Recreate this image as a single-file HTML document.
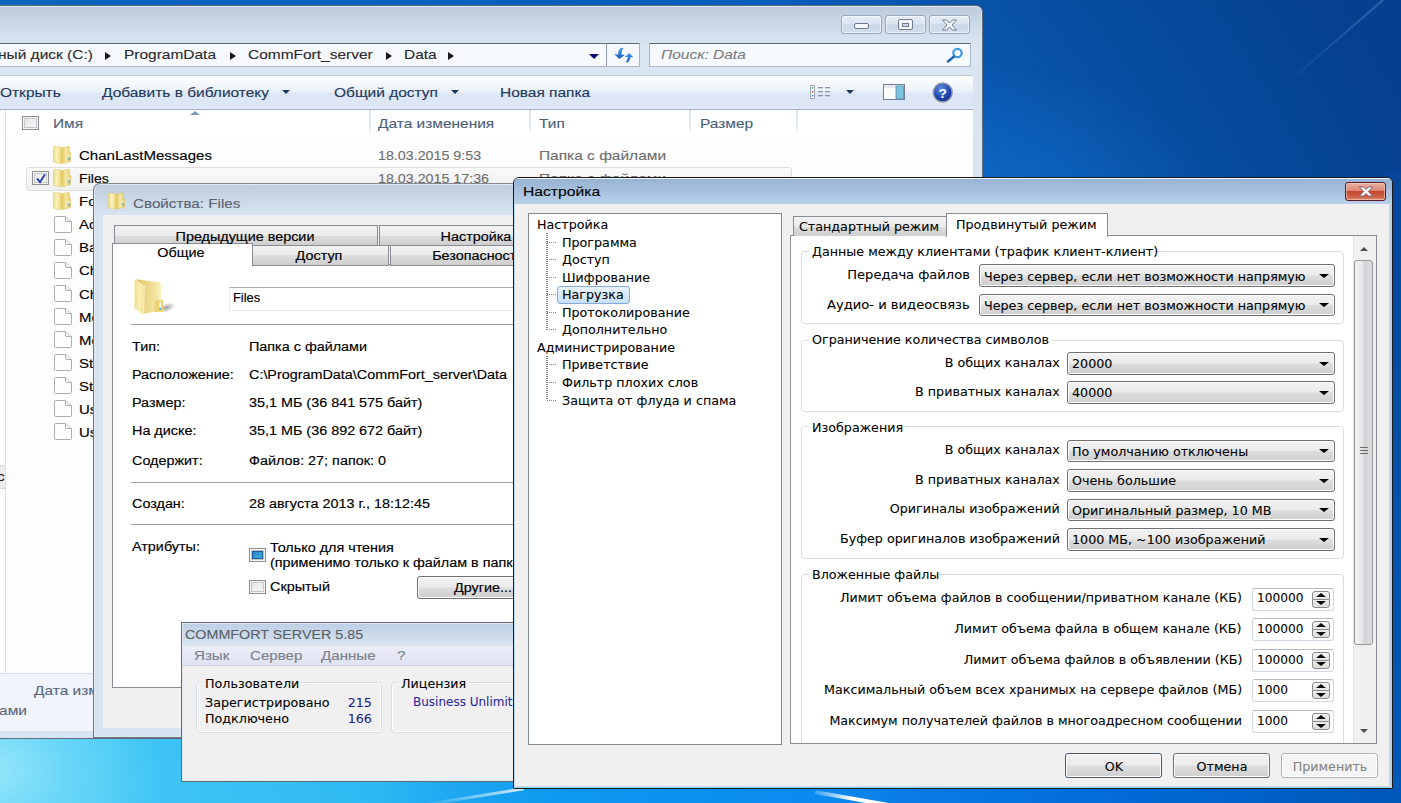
<!DOCTYPE html>
<html lang="ru">
<head>
<meta charset="utf-8">
<title>Настройка</title>
<style>
*{box-sizing:border-box;margin:0;padding:0}
html,body{width:1401px;height:803px;overflow:hidden}
body{position:relative;font-family:"Liberation Sans",sans-serif;font-size:13px;color:#000;
 background:#0a4fa6}
.abs{position:absolute}
.nw{white-space:nowrap}
/* horizontally stretched text helpers */
.sx{display:inline-block;white-space:nowrap;transform-origin:0 50%}
.sxr{display:inline-block;white-space:nowrap;transform-origin:100% 50%}
/* ---------- desktop ---------- */
#desk{position:absolute;left:0;top:0;width:1401px;height:803px;overflow:hidden;
 background:radial-gradient(ellipse 170px 120px at -10px 770px,rgba(155,232,250,.95),rgba(125,224,249,.6) 45%,rgba(100,215,248,0) 100%),radial-gradient(circle at -100px 900px,#62d0f7 0,#52caf6 177px,#3fc5f5 277px,#2bb7f2 511px,#22a2f0 708px,#1e94e8 810px,#0f64be 905px,#0d60be 1000px,#0a5cbc 1250px,#0853a8 1400px,#054a9c 1531px,#063f8e 1700px)}
#desk .glow{position:absolute;left:960px;top:60px;width:260px;height:200px;background:radial-gradient(ellipse at 10% 80%,rgba(20,120,215,.55),rgba(20,120,215,0) 70%)}
#desk .bs{position:absolute;left:380px;top:776px;width:1021px;height:27px;background:linear-gradient(90deg,rgba(32,170,240,0) 0,#1fa8f0 70px,#0d9af0 170px,#0a90f0 320px,#0b8af0 450px,#0a7ce6 520px,#0068d4 770px,#0058b8 1021px)}
#desk .rs{position:absolute;left:1384px;top:170px;width:17px;height:633px;background:linear-gradient(180deg,#05469a,#034ea6 35%,#0254b0 68%,#0058b8 97%)}
#desk .fs{position:absolute;left:1285px;top:84px;width:130px;height:1.5px;background:linear-gradient(90deg,rgba(120,170,230,0),rgba(120,170,230,.35));transform:rotate(-41deg);transform-origin:0 50%}
#desk .streak1{position:absolute;left:815px;top:790px;width:95px;height:4px;background:linear-gradient(90deg,rgba(255,255,255,.2),#fff 40%,#fff);transform:rotate(10deg);transform-origin:0 50%;border-radius:2px}
#desk .streak2{position:absolute;left:425px;top:803px;width:100px;height:3px;background:linear-gradient(90deg,rgba(255,255,255,0),rgba(255,255,255,.8));transform:rotate(-9deg);transform-origin:0 50%;border-radius:2px}
/* ---------- text groups ---------- */
.seg{-webkit-text-stroke:.12px currentColor;position:absolute;white-space:nowrap;font-family:"Liberation Sans",sans-serif;font-size:13px;line-height:16px;transform:scaleX(1.19);transform-origin:0 50%;color:#000}
.ms{-webkit-text-stroke:.15px currentColor;position:absolute;margin-top:.5px;white-space:nowrap;font-family:"Liberation Sans",sans-serif;font-size:12.5px;line-height:16px;transform:scaleX(1.15);transform-origin:0 50%;color:#000}
.tah{-webkit-text-stroke:.08px currentColor;position:absolute;margin-top:.8px;white-space:nowrap;font-family:"DejaVu Sans","Liberation Sans",sans-serif;font-size:12px;line-height:16px;transform:scaleX(1.058);transform-origin:0 50%;color:#000}
.r{transform-origin:100% 50%}
.c{transform-origin:50% 50%;text-align:center}
/* ---------- explorer ---------- */
#exp{position:absolute;left:-30px;top:5px;width:1013px;height:734px;border:1px solid #5f6b7a;border-radius:7px;
 background:linear-gradient(180deg,#bccbdc 0px,#c6d4e3 12px,#d4dfed 28px,#dae5f2 40px,#d9e4f1 100%);
 box-shadow:inset 0 0 0 1px #dbe5f0}
.addr{position:absolute;top:43px;height:24px;background:#f6f9fd;border:1px solid #a9b6c7;border-top-color:#5f6a78;border-radius:1px}
.tb{position:absolute;left:0;top:75px;width:973px;height:35px;background:linear-gradient(180deg,#ffffff 0%,#f4f8fd 25%,#e9f0fa 49%,#dce6f4 52%,#dce6f4 92%,#e4ecf7 100%);border-top:1px solid #c3cad4;border-bottom:1px solid #a3b2c6}
.ct{position:absolute;left:0;top:110px;width:973px;height:563px;background:#fdfdfd}
.dp{position:absolute;left:0;top:673px;width:973px;height:58px;background:#f1f5fb;border-top:1px solid #d4dfed}
.tbt{color:#1e395b}
.hdr{color:#4c607a}
.gray{color:#6d6d6d}
.arr{position:absolute;width:0;height:0;border-style:solid}
.colsep{position:absolute;top:110px;width:1.5px;height:25px;background:linear-gradient(180deg,#dde6f5,#e4ebf6 70%,#fff)}
.fold{position:absolute;width:18px;height:18px}
.fico{position:absolute;width:14px;height:17px}
.chk{position:absolute;width:15px;height:15px;border:1px solid #8e8f8f;background:linear-gradient(135deg,#e2e2e2,#fbfbfb);box-shadow:inset 0 0 0 1px #f4f4f4,inset 0 0 0 2px #c4c7cc}


/* ---------- settings ---------- */
.combo{position:absolute;height:22.5px;border:1px solid #707070;border-radius:3px;background:linear-gradient(180deg,#f2f2f2 0%,#ebebeb 48%,#dddddd 52%,#cfcfcf 100%);box-shadow:inset 0 0 0 1px #fcfcfc}
.combo:after{content:"";position:absolute;right:5px;top:8.5px;border-style:solid;border-width:4.6px 5px 0 5px;border-color:#000 transparent transparent transparent}
.gbx{position:absolute;border:1px solid #d5dfe5;border-radius:4px}
.gl{position:absolute;background:#fff;height:14px}
.spin{position:absolute;width:82px;height:23px;background:#fff;border:1px solid #cfd7e2;border-top-color:#b4bac4;border-radius:3px}
.btn{position:absolute;height:25px;border:1px solid #707070;border-radius:3px;background:linear-gradient(180deg,#f2f2f2 0%,#ebebeb 48%,#dddddd 52%,#cfcfcf 100%);box-shadow:inset 0 0 0 1px #fcfcfc}
.dotv{position:absolute;width:1.4px;margin-left:-.6px;background:repeating-linear-gradient(180deg,#868686 0,#868686 1px,transparent 1px,transparent 2px)}
.doth{position:absolute;height:1.3px;margin-left:-1px;padding-right:2px;background:repeating-linear-gradient(90deg,#868686 0,#868686 1px,transparent 1px,transparent 2px)}

/* ---------- generic window bits ---------- */
.layer{position:absolute;left:0;top:0;width:1401px;height:803px;overflow:hidden;pointer-events:none}
</style>
</head>
<body>
<div id="desk"><div class="glow"></div><div class="rs"></div><div class="bs"></div><div class="fs"></div><div class="streak1"></div><div class="streak2"></div></div>

<!-- EXPLORER -->
<svg width="0" height="0" style="position:absolute"><defs>
<linearGradient id="fdl" x1="0" y1="0" x2="1" y2="0"><stop offset="0" stop-color="#efdc86"/><stop offset=".45" stop-color="#fbf3bf"/><stop offset="1" stop-color="#e9d06c"/></linearGradient>
<linearGradient id="fdr" x1="0" y1="0" x2="1" y2="0"><stop offset="0" stop-color="#e2c558"/><stop offset=".5" stop-color="#f5e9a6"/><stop offset="1" stop-color="#e6cb64"/></linearGradient>
</defs></svg>
<div class="layer" id="L1">
<div id="exp"></div>
<div class="addr" style="left:-12px;width:619px"></div>
<div class="addr" style="left:606px;width:34px;border-left-color:#8f9caf"></div>
<div class="addr" style="left:649px;width:322px"></div>
<div class="tb"></div><div class="ct"></div><div class="dp"></div>
<div class="abs" style="left:841px;top:15px;width:41px;height:19px;border:1px solid #97a6ba;border-radius:3px;background:linear-gradient(180deg,#e6edf6 0%,#dae4f0 48%,#cbd7e8 52%,#d3deec 100%);box-shadow:inset 0 0 0 1px rgba(255,255,255,.55)"></div>
<div class="abs" style="left:885px;top:15px;width:41px;height:19px;border:1px solid #97a6ba;border-radius:3px;background:linear-gradient(180deg,#e6edf6 0%,#dae4f0 48%,#cbd7e8 52%,#d3deec 100%);box-shadow:inset 0 0 0 1px rgba(255,255,255,.55)"></div>
<div class="abs" style="left:929px;top:15px;width:41px;height:19px;border:1px solid #97a6ba;border-radius:3px;background:linear-gradient(180deg,#e6edf6 0%,#dae4f0 48%,#cbd7e8 52%,#d3deec 100%);box-shadow:inset 0 0 0 1px rgba(255,255,255,.55)"></div>
<div class="abs" style="left:854px;top:23px;width:15px;height:6px;border:1px solid #6f7c8e;border-radius:2px;background:#f4f6f9"></div>
<div class="abs" style="left:898px;top:19px;width:15px;height:11px;border:1px solid #6f7c8e;border-radius:2px;background:#f4f6f9"></div><div class="abs" style="left:902px;top:23px;width:7px;height:4px;border:1px solid #6f7c8e;background:#cfd9e6"></div>
<svg class="abs" style="left:941px;top:19px;width:17px;height:12px" viewBox="0 0 17 12"><path d="M1.5 1 H5.5 L8.5 4 L11.5 1 H15.5 L11 6 L15.5 11 H11.5 L8.5 8 L5.5 11 H1.5 L6 6 Z" fill="#f6f8fb" stroke="#6f7c8e" stroke-width="1"/></svg>
<span class="seg " style="left:-2px;top:47.0px;color:#2b2b2b;transform:scaleX(1.19)">ный диск (C:)</span>
<span class="seg " style="left:124px;top:47.0px;color:#2b2b2b">ProgramData</span>
<span class="seg " style="left:248px;top:47.0px;color:#2b2b2b">CommFort_server</span>
<span class="seg " style="left:404px;top:47.0px;color:#2b2b2b">Data</span>
<div class="arr" style="left:105px;top:52px;border-width:4px 0 4px 6px;border-color:transparent transparent transparent #1a1a1a"></div>
<div class="arr" style="left:230px;top:52px;border-width:4px 0 4px 6px;border-color:transparent transparent transparent #1a1a1a"></div>
<div class="arr" style="left:386px;top:52px;border-width:4px 0 4px 6px;border-color:transparent transparent transparent #1a1a1a"></div>
<div class="arr" style="left:448px;top:52px;border-width:4px 0 4px 6px;border-color:transparent transparent transparent #1a1a1a"></div>
<div class="arr" style="left:589px;top:54px;border-width:5px 5px 0 5px;border-color:#0a0a6a transparent transparent transparent"></div>
<svg class="abs" style="left:613px;top:47px;width:21px;height:16px" viewBox="0 0 21 16"><defs><linearGradient id="rfg" x1="0" y1="0" x2="0" y2="1"><stop offset="0" stop-color="#4a9cec"/><stop offset="1" stop-color="#1b5cbc"/></linearGradient></defs><path d="M8 .8 Q9.6 .6 10.6 1.6 Q8.2 3.6 8.6 7.5 L12 7.9 L6.3 12 L1.2 7.2 L5.2 7.4 Q5 3 8 .8 Z" fill="url(#rfg)"/><path d="M16.2 6.1 L20.3 10.3 L17.6 10.2 Q17.4 13.6 14.6 15.6 Q13.4 15.6 12.8 15 Q14.8 13 14.8 10.1 L11.9 10 Z" fill="url(#rfg)"/></svg>
<span class="seg " style="left:661px;top:47.0px;color:#7d7d7d;font-style:italic">Поиск: Data</span>
<svg class="abs" style="left:946px;top:47px;width:18px;height:17px" viewBox="0 0 18 17"><circle cx="11.5" cy="6" r="4.2" fill="#f4fbff" stroke="#3f9be0" stroke-width="2.2"/><path d="M8 9.5 L2 14.5" stroke="#2465b8" stroke-width="2.6" stroke-linecap="round"/></svg>
<span class="seg tbt" style="left:0px;top:84.5px;">Открыть</span>
<span class="seg tbt" style="left:102px;top:84.5px;">Добавить в библиотеку</span>
<span class="seg tbt" style="left:334px;top:84.5px;">Общий доступ</span>
<span class="seg tbt" style="left:500px;top:84.5px;">Новая папка</span>
<div class="arr" style="left:281.5px;top:90px;border-width:4.5px 4.5px 0 4.5px;border-color:#1e395b transparent transparent transparent"></div>
<div class="arr" style="left:450.5px;top:90px;border-width:4.5px 4.5px 0 4.5px;border-color:#1e395b transparent transparent transparent"></div>
<div class="arr" style="left:845.5px;top:90px;border-width:4.5px 4.5px 0 4.5px;border-color:#1e395b transparent transparent transparent"></div>
<svg class="abs" style="left:810px;top:85px;width:21px;height:14px" viewBox="0 0 21 14"><rect x=".5" y=".5" width="4" height="13" fill="#fff" stroke="#9aa7b8"/><rect x="2" y="2" width="1.4" height="1.4" fill="#4a9a4a"/><rect x="2" y="6" width="1.4" height="1.4" fill="#d04040"/><rect x="2" y="10" width="1.4" height="1.4" fill="#4060d0"/><g fill="#8a96a8"><rect x="8" y="2" width="5" height="1.3"/><rect x="15" y="2" width="5" height="1.3"/><rect x="8" y="6" width="5" height="1.3"/><rect x="15" y="6" width="5" height="1.3"/><rect x="8" y="10" width="5" height="1.3"/><rect x="15" y="10" width="5" height="1.3"/></g></svg>
<svg class="abs" style="left:883px;top:84px;width:22px;height:16px" viewBox="0 0 22 16"><rect x=".5" y=".5" width="21" height="15" fill="#fdfdfd" stroke="#6f7f96"/><rect x="1" y="1" width="20" height="3" fill="#e4e9f0"/><rect x="13" y="2" width="7.5" height="13" fill="#7ec3e0" stroke="#5a8fb0" stroke-width=".8"/></svg>
<svg class="abs" style="left:931.5px;top:81.5px;width:21.5px;height:21px" viewBox="0 0 23 23"><defs><radialGradient id="hg" cx=".4" cy=".3" r=".8"><stop offset="0" stop-color="#5b8fe0"/><stop offset=".6" stop-color="#1f45b0"/><stop offset="1" stop-color="#12308c"/></radialGradient></defs><circle cx="11.5" cy="11.5" r="10.3" fill="url(#hg)" stroke="#8e98aa" stroke-width="1.6"/><text x="11.5" y="17" text-anchor="middle" font-family="Liberation Sans, sans-serif" font-weight="bold" font-size="15" fill="#fff">?</text></svg>
<div class="abs" style="left:5px;top:110px;width:1px;height:563px;background:#d9e3ef"></div>
<div class="abs" style="left:0;top:465px;width:5px;height:24px;background:#ececec;border-top:1px solid #dadada;border-bottom:1px solid #dadada"></div><span class="seg" style="left:-3px;top:469px;color:#222">с</span>
<div class="abs" style="left:6px;top:110px;width:967px;height:26px;background:#fff"></div>
<div class="colsep" style="left:369px"></div>
<div class="colsep" style="left:529px"></div>
<div class="colsep" style="left:689px"></div>
<div class="colsep" style="left:796px"></div>
<span class="seg hdr" style="left:53px;top:115.5px;">Имя</span>
<span class="seg hdr" style="left:378px;top:115.5px;">Дата изменения</span>
<span class="seg hdr" style="left:539px;top:115.5px;">Тип</span>
<span class="seg hdr" style="left:700px;top:115.5px;">Размер</span>
<div class="chk" style="left:22px;top:116px;width:17px;height:14px"></div>
<div class="arr" style="left:190px;top:111px;border-width:0 5px 4px 5px;border-color:transparent transparent #7b9cc0 transparent"></div>
<div class="abs" style="left:26px;top:167px;width:766px;height:24px;border:1px solid #dedede;border-radius:3px;background:linear-gradient(180deg,#fafafa,#efefef)"></div>
<div class="chk" style="left:32px;top:171px;width:17px;height:14px"></div><svg class="abs" style="left:34.5px;top:172.5px;width:12px;height:11px" viewBox="0 0 12 12" preserveAspectRatio="none"><path d="M2 6 L5 10 L10 1.5" fill="none" stroke="#2a3fb0" stroke-width="2"/></svg>
<svg class="fold" style="left:53px;top:146.0px" viewBox="0 0 18 18"><path d="M9 1.6 L15.4 .5 Q16.4 .4 16.4 1.5 V6.6 H17.6 V15.4 L16.4 15.8 L9.6 17.6 L8.4 17 Z" fill="url(#fdr)" stroke="#d9bd58" stroke-width=".5"/><path d="M.5 1.6 Q.5 .5 1.6 .5 L7.4 .9 Q8.7 1.1 8.7 2.8 V17 L7.2 17.7 L1.2 16.4 Q.4 16.2 .4 15.3 Z" fill="url(#fdl)" stroke="#dcc264" stroke-width=".5"/><rect x="15.4" y="8.6" width="1.2" height="2.6" fill="#fdfdf6"/><rect x="15.4" y="11" width="1.2" height="3.2" fill="#45a2e6"/></svg>
<span class="seg" style="left:79px;top:148.2px;transform:scaleX(1.157)">ChanLastMessages</span>
<span class="seg gray" style="left:378px;top:148.2px;transform:scaleX(1.097)">18.03.2015 9:53</span>
<span class="seg gray" style="left:539px;top:148.2px">Папка с файлами</span>
<svg class="fold" style="left:53px;top:169.1px" viewBox="0 0 18 18"><path d="M9 1.6 L15.4 .5 Q16.4 .4 16.4 1.5 V6.6 H17.6 V15.4 L16.4 15.8 L9.6 17.6 L8.4 17 Z" fill="url(#fdr)" stroke="#d9bd58" stroke-width=".5"/><path d="M.5 1.6 Q.5 .5 1.6 .5 L7.4 .9 Q8.7 1.1 8.7 2.8 V17 L7.2 17.7 L1.2 16.4 Q.4 16.2 .4 15.3 Z" fill="url(#fdl)" stroke="#dcc264" stroke-width=".5"/><rect x="15.4" y="8.6" width="1.2" height="2.6" fill="#fdfdf6"/><rect x="15.4" y="11" width="1.2" height="3.2" fill="#45a2e6"/></svg>
<span class="seg" style="left:79px;top:171.2px;transform:scaleX(1.09)">Files</span>
<span class="seg gray" style="left:378px;top:171.2px;transform:scaleX(1.097)">18.03.2015 17:36</span>
<span class="seg gray" style="left:539px;top:171.2px">Папка с файлами</span>
<svg class="fold" style="left:53px;top:192.1px" viewBox="0 0 18 18"><path d="M9 1.6 L15.4 .5 Q16.4 .4 16.4 1.5 V6.6 H17.6 V15.4 L16.4 15.8 L9.6 17.6 L8.4 17 Z" fill="url(#fdr)" stroke="#d9bd58" stroke-width=".5"/><path d="M.5 1.6 Q.5 .5 1.6 .5 L7.4 .9 Q8.7 1.1 8.7 2.8 V17 L7.2 17.7 L1.2 16.4 Q.4 16.2 .4 15.3 Z" fill="url(#fdl)" stroke="#dcc264" stroke-width=".5"/><rect x="15.4" y="8.6" width="1.2" height="2.6" fill="#fdfdf6"/><rect x="15.4" y="11" width="1.2" height="3.2" fill="#45a2e6"/></svg>
<span class="seg" style="left:79px;top:194.3px;transform:scaleX(1.15)">Fo</span>
<svg class="fico" style="left:54px;top:215.7px;width:18px;height:17px" viewBox="0 0 18 17"><path d="M1.5 .5 H11.5 L17.5 5.5 V15.5 Q17.5 16.5 16.5 16.5 H1.5 Q.5 16.5 .5 15.5 V1.5 Q.5 .5 1.5 .5 Z" fill="#fdfdfd" stroke="#adadad" stroke-width="1"/><path d="M11.5 .5 V4.5 Q11.5 5.5 12.5 5.5 H17.5" fill="#f0f0f0" stroke="#adadad" stroke-width="1"/></svg>
<span class="seg" style="left:79px;top:217.3px;transform:scaleX(1.15)">Ac</span>
<svg class="fico" style="left:54px;top:238.7px;width:18px;height:17px" viewBox="0 0 18 17"><path d="M1.5 .5 H11.5 L17.5 5.5 V15.5 Q17.5 16.5 16.5 16.5 H1.5 Q.5 16.5 .5 15.5 V1.5 Q.5 .5 1.5 .5 Z" fill="#fdfdfd" stroke="#adadad" stroke-width="1"/><path d="M11.5 .5 V4.5 Q11.5 5.5 12.5 5.5 H17.5" fill="#f0f0f0" stroke="#adadad" stroke-width="1"/></svg>
<span class="seg" style="left:79px;top:240.4px;transform:scaleX(1.15)">Ba</span>
<svg class="fico" style="left:54px;top:261.8px;width:18px;height:17px" viewBox="0 0 18 17"><path d="M1.5 .5 H11.5 L17.5 5.5 V15.5 Q17.5 16.5 16.5 16.5 H1.5 Q.5 16.5 .5 15.5 V1.5 Q.5 .5 1.5 .5 Z" fill="#fdfdfd" stroke="#adadad" stroke-width="1"/><path d="M11.5 .5 V4.5 Q11.5 5.5 12.5 5.5 H17.5" fill="#f0f0f0" stroke="#adadad" stroke-width="1"/></svg>
<span class="seg" style="left:79px;top:263.4px;transform:scaleX(1.15)">Ch</span>
<svg class="fico" style="left:54px;top:284.8px;width:18px;height:17px" viewBox="0 0 18 17"><path d="M1.5 .5 H11.5 L17.5 5.5 V15.5 Q17.5 16.5 16.5 16.5 H1.5 Q.5 16.5 .5 15.5 V1.5 Q.5 .5 1.5 .5 Z" fill="#fdfdfd" stroke="#adadad" stroke-width="1"/><path d="M11.5 .5 V4.5 Q11.5 5.5 12.5 5.5 H17.5" fill="#f0f0f0" stroke="#adadad" stroke-width="1"/></svg>
<span class="seg" style="left:79px;top:286.5px;transform:scaleX(1.15)">Ch</span>
<svg class="fico" style="left:54px;top:307.9px;width:18px;height:17px" viewBox="0 0 18 17"><path d="M1.5 .5 H11.5 L17.5 5.5 V15.5 Q17.5 16.5 16.5 16.5 H1.5 Q.5 16.5 .5 15.5 V1.5 Q.5 .5 1.5 .5 Z" fill="#fdfdfd" stroke="#adadad" stroke-width="1"/><path d="M11.5 .5 V4.5 Q11.5 5.5 12.5 5.5 H17.5" fill="#f0f0f0" stroke="#adadad" stroke-width="1"/></svg>
<span class="seg" style="left:79px;top:309.6px;transform:scaleX(1.15)">Me</span>
<svg class="fico" style="left:54px;top:330.9px;width:18px;height:17px" viewBox="0 0 18 17"><path d="M1.5 .5 H11.5 L17.5 5.5 V15.5 Q17.5 16.5 16.5 16.5 H1.5 Q.5 16.5 .5 15.5 V1.5 Q.5 .5 1.5 .5 Z" fill="#fdfdfd" stroke="#adadad" stroke-width="1"/><path d="M11.5 .5 V4.5 Q11.5 5.5 12.5 5.5 H17.5" fill="#f0f0f0" stroke="#adadad" stroke-width="1"/></svg>
<span class="seg" style="left:79px;top:332.6px;transform:scaleX(1.15)">Me</span>
<svg class="fico" style="left:54px;top:354.0px;width:18px;height:17px" viewBox="0 0 18 17"><path d="M1.5 .5 H11.5 L17.5 5.5 V15.5 Q17.5 16.5 16.5 16.5 H1.5 Q.5 16.5 .5 15.5 V1.5 Q.5 .5 1.5 .5 Z" fill="#fdfdfd" stroke="#adadad" stroke-width="1"/><path d="M11.5 .5 V4.5 Q11.5 5.5 12.5 5.5 H17.5" fill="#f0f0f0" stroke="#adadad" stroke-width="1"/></svg>
<span class="seg" style="left:79px;top:355.7px;transform:scaleX(1.15)">St</span>
<svg class="fico" style="left:54px;top:377.0px;width:18px;height:17px" viewBox="0 0 18 17"><path d="M1.5 .5 H11.5 L17.5 5.5 V15.5 Q17.5 16.5 16.5 16.5 H1.5 Q.5 16.5 .5 15.5 V1.5 Q.5 .5 1.5 .5 Z" fill="#fdfdfd" stroke="#adadad" stroke-width="1"/><path d="M11.5 .5 V4.5 Q11.5 5.5 12.5 5.5 H17.5" fill="#f0f0f0" stroke="#adadad" stroke-width="1"/></svg>
<span class="seg" style="left:79px;top:378.7px;transform:scaleX(1.15)">St</span>
<svg class="fico" style="left:54px;top:400.1px;width:18px;height:17px" viewBox="0 0 18 17"><path d="M1.5 .5 H11.5 L17.5 5.5 V15.5 Q17.5 16.5 16.5 16.5 H1.5 Q.5 16.5 .5 15.5 V1.5 Q.5 .5 1.5 .5 Z" fill="#fdfdfd" stroke="#adadad" stroke-width="1"/><path d="M11.5 .5 V4.5 Q11.5 5.5 12.5 5.5 H17.5" fill="#f0f0f0" stroke="#adadad" stroke-width="1"/></svg>
<span class="seg" style="left:79px;top:401.8px;transform:scaleX(1.15)">Us</span>
<svg class="fico" style="left:54px;top:423.1px;width:18px;height:17px" viewBox="0 0 18 17"><path d="M1.5 .5 H11.5 L17.5 5.5 V15.5 Q17.5 16.5 16.5 16.5 H1.5 Q.5 16.5 .5 15.5 V1.5 Q.5 .5 1.5 .5 Z" fill="#fdfdfd" stroke="#adadad" stroke-width="1"/><path d="M11.5 .5 V4.5 Q11.5 5.5 12.5 5.5 H17.5" fill="#f0f0f0" stroke="#adadad" stroke-width="1"/></svg>
<span class="seg" style="left:79px;top:424.8px;transform:scaleX(1.15)">Us</span>
<span class="seg " style="left:34px;top:682.5px;color:#5a6779">Дата изм</span>
<span class="seg " style="left:-52px;top:702.5px;color:#5a6779">с файлами</span>
</div>

<!-- PROPERTIES -->
<div class="layer" id="L2">
<div class="abs" style="left:93px;top:183px;width:560px;height:555px;border:1px solid #6f7680;border-top-color:#85888d;border-radius:7px 7px 0 0;background:linear-gradient(180deg,#bdccdc 0px,#cad7e5 14px,#d8e4f1 32px,#d8e4f1 100%);box-shadow:inset 0 0 0 1px #dfe8f2"></div>
<div class="abs" style="left:103px;top:215px;width:560px;height:513px;background:#f0f0f0"></div>
<svg class="abs" style="left:108px;top:192px;width:17px;height:18px" viewBox="0 0 18 18"><path d="M9 1.6 L15.4 .5 Q16.4 .4 16.4 1.5 V6.6 H17.6 V15.4 L16.4 15.8 L9.6 17.6 L8.4 17 Z" fill="url(#fdr)" stroke="#d9bd58" stroke-width=".5"/><path d="M.5 1.6 Q.5 .5 1.6 .5 L7.4 .9 Q8.7 1.1 8.7 2.8 V17 L7.2 17.7 L1.2 16.4 Q.4 16.2 .4 15.3 Z" fill="url(#fdl)" stroke="#dcc264" stroke-width=".5"/><rect x="15.4" y="8.6" width="1.2" height="2.6" fill="#fdfdf6"/><rect x="15.4" y="11" width="1.2" height="3.2" fill="#45a2e6"/></svg>
<span class="seg" style="left:133px;top:195.5px;color:#5b6270;transform:scaleX(1.17)">Свойства: Files</span>
<div class="abs" style="left:112px;top:264px;width:560px;height:424px;background:#fff;border:1px solid #898c95"></div>
<div class="abs" style="left:114px;top:225px;width:264px;height:21px;background:linear-gradient(180deg,#f2f2f2 0%,#ebebeb 50%,#dddddd 50%,#cfcfcf 100%);border:1px solid #898c95"></div>
<div class="abs" style="left:379px;top:225px;width:265px;height:21px;background:linear-gradient(180deg,#f2f2f2 0%,#ebebeb 50%,#dddddd 50%,#cfcfcf 100%);border:1px solid #898c95"></div>
<div class="abs" style="left:252px;top:245px;width:136.5px;height:21px;background:linear-gradient(180deg,#f2f2f2 0%,#ebebeb 50%,#dddddd 50%,#cfcfcf 100%);border:1px solid #898c95"></div>
<div class="abs" style="left:389.5px;top:245px;width:137px;height:21px;background:linear-gradient(180deg,#f2f2f2 0%,#ebebeb 50%,#dddddd 50%,#cfcfcf 100%);border:1px solid #898c95"></div>
<div class="abs" style="left:112px;top:243px;width:141px;height:23px;background:#fff;border:1px solid #898c95;border-bottom:none"></div>
<span class="ms c" style="left:145px;width:200px;top:228.2px">Предыдущие версии</span>
<span class="ms c" style="left:376px;width:200px;top:228.2px">Настройка</span>
<span class="ms c" style="left:80.6px;width:200px;top:244.7px">Общие</span>
<span class="ms c" style="left:219px;width:200px;top:247.7px">Доступ</span>
<span class="ms c" style="left:378px;width:200px;top:247.7px">Безопасность</span>
<svg class="abs" style="left:120px;top:268px;width:80px;height:57px" viewBox="0 0 1127 803"><defs><linearGradient id="bfb" x1="0" y1="0" x2="1" y2="0"><stop offset="0" stop-color="#d9bc58"/><stop offset=".35" stop-color="#ead580"/><stop offset=".85" stop-color="#f5e8aa"/><stop offset="1" stop-color="#fbf4cc"/></linearGradient><linearGradient id="bff" x1="0" y1="0" x2="1" y2="0"><stop offset="0" stop-color="#f0dc86"/><stop offset=".5" stop-color="#f9efb6"/><stop offset="1" stop-color="#f2e194"/></linearGradient><radialGradient id="bfs" cx=".5" cy=".5" r=".5"><stop offset="0" stop-color="#000" stop-opacity=".38"/><stop offset="1" stop-color="#000" stop-opacity="0"/></radialGradient></defs><ellipse cx="650" cy="560" rx="140" ry="62" fill="url(#bfs)" transform="rotate(-18 650 560)"/><path d="M225 160 L570 203 Q582 205 582 218 L580 600 L335 646 L300 250 Z" fill="url(#bfb)"/><rect x="488" y="455" width="120" height="166" rx="12" fill="#ecd36e"/><rect x="556" y="480" width="22" height="82" fill="#fffef4"/><rect x="556" y="560" width="22" height="30" fill="#4aa2e4"/><path d="M205 172 Q205 158 218 164 L345 245 L336 648 Q318 656 300 642 L205 566 Z" fill="url(#bff)"/><path d="M343 250 L334 646" stroke="#fffbe2" stroke-width="9" fill="none"/></svg>
<div class="abs" style="left:229px;top:287px;width:400px;height:24px;background:#fff;border:1px solid #e3e9ef;border-top-color:#abadb3"></div>
<span class="ms " style="left:233px;top:289.2px;transform:scaleX(1.03)">Files</span>
<div class="abs" style="left:131px;top:324px;width:500px;height:1px;background:#a0a0a0"></div>
<div class="abs" style="left:131px;top:482px;width:500px;height:1px;background:#a0a0a0"></div>
<div class="abs" style="left:131px;top:524px;width:500px;height:1px;background:#a0a0a0"></div>
<span class="ms " style="left:132px;top:338.2px;">Тип:</span>
<span class="ms " style="left:249px;top:338.2px;">Папка с файлами</span>
<span class="ms " style="left:132px;top:366.1px;">Расположение:</span>
<span class="ms " style="left:249px;top:366.1px;">C:\ProgramData\CommFort_server\Data</span>
<span class="ms " style="left:132px;top:394.3px;">Размер:</span>
<span class="ms " style="left:249px;top:394.3px;">35,1 МБ (36 841 575 байт)</span>
<span class="ms " style="left:132px;top:422.7px;">На диске:</span>
<span class="ms " style="left:249px;top:422.7px;">35,1 МБ (36 892 672 байт)</span>
<span class="ms " style="left:132px;top:452.3px;">Содержит:</span>
<span class="ms " style="left:249px;top:452.3px;">Файлов: 27; папок: 0</span>
<span class="ms " style="left:132px;top:495.1px;">Создан:</span>
<span class="ms " style="left:249px;top:495.1px;">28 августа 2013 г., 18:12:45</span>
<span class="ms " style="left:132px;top:538.0px;">Атрибуты:</span>
<div class="chk" style="left:249px;top:548px;width:17px;height:14px"></div><div class="abs" style="left:252px;top:551px;width:11px;height:8px;background:linear-gradient(135deg,#2f7fc8,#39b4e0);border:1px solid #1c5a9a"></div>
<span class="ms " style="left:270px;top:539.2px;">Только для чтения</span>
<span class="ms " style="left:270px;top:554.2px;">(применимо только к файлам в папке)</span>
<div class="chk" style="left:249px;top:580px;width:17px;height:14px"></div>
<span class="ms " style="left:270px;top:578.2px;">Скрытый</span>
<div class="abs" style="left:417px;top:576px;width:130px;height:23px;border:1px solid #707070;border-radius:3px;background:linear-gradient(180deg,#f2f2f2 0%,#ebebeb 48%,#dddddd 52%,#cfcfcf 100%);box-shadow:inset 0 0 0 1px #fcfcfc"></div>
<span class="ms " style="left:454px;top:579.7px;">Другие...</span>
</div>

<!-- COMMFORT -->
<div class="layer" id="L3">
<div class="abs" style="left:181px;top:622px;width:420px;height:160px;border:1px solid #666c74;background:#f0f0f0;box-shadow:inset 0 0 0 1px #dfe6ee"></div>
<div class="abs" style="left:183px;top:624px;width:420px;height:22px;background:linear-gradient(180deg,#bfd0e5,#d8e4f1)"></div>
<span class="seg" style="left:185px;top:627px;font-size:13.5px;color:#5a5f66;transform:scaleX(1.06)">COMMFORT SERVER 5.85</span>
<div class="abs" style="left:183px;top:646px;width:420px;height:20px;background:linear-gradient(180deg,#eceef8,#dfe3f2);border-bottom:1px solid #c9cfe0"></div>
<span class="seg" style="left:194px;top:648.0px;color:#7a7f88;font-size:13.5px;transform:scaleX(1.12)">Язык</span>
<span class="seg" style="left:249.5px;top:648.0px;color:#7a7f88;font-size:13.5px;transform:scaleX(1.12)">Сервер</span>
<span class="seg" style="left:321px;top:648.0px;color:#7a7f88;font-size:13.5px;transform:scaleX(1.12)">Данные</span>
<span class="seg" style="left:397px;top:648.0px;color:#7a7f88;font-size:13.5px;transform:scaleX(1.12)">?</span>
<div class="abs" style="left:196px;top:682px;width:186px;height:51px;border:1px solid #d5dfe5;border-radius:4px;box-shadow:inset 0 0 0 1px #fff"></div>
<div class="abs" style="left:391px;top:682px;width:186px;height:51px;border:1px solid #d5dfe5;border-radius:4px;box-shadow:inset 0 0 0 1px #fff"></div>
<div class="abs" style="left:203px;top:676px;width:96px;height:12px;background:#f0f0f0"></div>
<div class="abs" style="left:398px;top:676px;width:70px;height:12px;background:#f0f0f0"></div>
<span class="tah " style="left:205px;top:674.95px;">Пользователи</span>
<span class="tah " style="left:401px;top:674.95px;">Лицензия</span>
<span class="tah " style="left:204.5px;top:694.65px;">Зарегистрировано</span>
<span class="tah " style="left:204.5px;top:709.95px;">Подключено</span>
<span class="tah r" style="right:1029.5px;top:694.65px;color:#1c1c8c">215</span>
<span class="tah r" style="right:1029.5px;top:709.95px;color:#1c1c8c">166</span>
<span class="tah " style="left:413px;top:693.65px;color:#2a2a9c;transform:scaleX(1.0)">Business Unlimited</span>
</div>

<!-- SETTINGS -->
<div class="layer" id="L4">
<div class="abs" style="left:513px;top:177px;width:880px;height:612px;border:1px solid #1a1a1c;border-radius:6px 6px 1px 1px;background:#f0f0f0;overflow:hidden;box-shadow:inset 1px 0 0 #bfdcf5,inset -1px 0 0 #8fdcf5,inset -3px 0 0 #c3d8ee,inset 0 -1px 0 #8fdcf5,inset 0 -2px 0 #c3d8ee"><div style="height:26px;border-top:1px solid #f4f8fc;background:linear-gradient(180deg,#98b4d4 0%,#a6bfdd 45%,#b9d1ea 100%)"></div></div>
<span class="seg" style="left:522.5px;top:184px;font-size:13.5px;color:#000;transform:scaleX(1.16)">Настройка</span>
<div class="abs" style="left:1345px;top:182px;width:41px;height:19px;border:1px solid #5a1a2a;border-radius:3px;background:linear-gradient(180deg,#eab0a2 0%,#dc8674 46%,#c4482e 50%,#cf6048 80%,#dd8a70 100%);box-shadow:inset 0 0 0 1px rgba(255,225,215,.5)"></div>
<svg class="abs" style="left:1357.5px;top:186px;width:16px;height:11px" viewBox="0 0 17 12" preserveAspectRatio="none"><path d="M1.5 1 H5.8 L8.5 3.8 L11.2 1 H15.5 L11 6 L15.5 11 H11.2 L8.5 8.2 L5.8 11 H1.5 L6 6 Z" fill="#fff" stroke="#70606a" stroke-width="1"/></svg>
<div class="abs" style="left:528px;top:213px;width:254px;height:532px;background:#fff;border:1px solid #828790"></div>
<div class="abs" style="left:557px;top:286px;width:73px;height:18px;border:1px solid #84acdd;border-radius:3px;background:linear-gradient(180deg,#e8f2fd,#c9dffa)"></div>
<div class="dotv" style="left:547px;top:233px;height:97px"></div>
<div class="dotv" style="left:547px;top:356px;height:44px"></div>
<span class="tah " style="left:536.5px;top:216.2px;">Настройка</span>
<span class="tah " style="left:562px;top:234.0px;">Программа</span>
<div class="doth" style="left:548px;top:242px;width:10px"></div>
<span class="tah " style="left:562px;top:251.5px;">Доступ</span>
<div class="doth" style="left:548px;top:259px;width:10px"></div>
<span class="tah " style="left:562px;top:269.0px;">Шифрование</span>
<div class="doth" style="left:548px;top:277px;width:10px"></div>
<span class="tah " style="left:562px;top:286.4px;">Нагрузка</span>
<div class="doth" style="left:548px;top:294px;width:10px"></div>
<span class="tah " style="left:562px;top:303.9px;">Протоколирование</span>
<div class="doth" style="left:548px;top:312px;width:10px"></div>
<span class="tah " style="left:562px;top:321.4px;">Дополнительно</span>
<div class="doth" style="left:548px;top:329px;width:10px"></div>
<span class="tah " style="left:536.5px;top:339.0px;">Администрирование</span>
<span class="tah " style="left:562px;top:356.6px;">Приветствие</span>
<div class="doth" style="left:548px;top:364px;width:10px"></div>
<span class="tah " style="left:562px;top:374.2px;">Фильтр плохих слов</span>
<div class="doth" style="left:548px;top:382px;width:10px"></div>
<span class="tah " style="left:562px;top:391.8px;">Защита от флуда и спама</span>
<div class="doth" style="left:548px;top:400px;width:10px"></div>
<div class="abs" style="left:790px;top:235px;width:587px;height:509px;background:#fff;border:1px solid #898c95"></div>
<div class="abs" style="left:793px;top:216px;width:155px;height:20px;border:1px solid #898c95;border-bottom:none;background:linear-gradient(180deg,#f2f2f2 0%,#ebebeb 50%,#dddddd 50%,#cfcfcf 100%)"></div>
<div class="abs" style="left:946px;top:213px;width:162px;height:24px;border:1px solid #898c95;border-bottom:none;background:#fff"></div>
<span class="tah " style="left:799px;top:218.3px;">Стандартный режим</span>
<span class="tah " style="left:956px;top:216.3px;">Продвинутый режим</span>
<div class="abs" style="left:1353px;top:236px;width:23px;height:507px;background:#f0f0f0;border-left:1px solid #e3e3e3"></div>
<div class="abs" style="left:1353.5px;top:259.5px;width:19.5px;height:385.5px;border:1px solid #979797;border-radius:3px;background:linear-gradient(90deg,#f4f4f4 0%,#e6e6e8 45%,#d2d3d6 55%,#dcdde0 100%)"></div>
<div class="abs" style="left:1359.5px;top:447px;width:8px;height:1px;background:#6a6a6a"></div>
<div class="abs" style="left:1359.5px;top:450px;width:8px;height:1px;background:#6a6a6a"></div>
<div class="abs" style="left:1359.5px;top:453px;width:8px;height:1px;background:#6a6a6a"></div>
<div class="arr" style="left:1359.5px;top:247px;border-width:0 4px 4px 4px;border-color:transparent transparent #505050 transparent"></div>
<div class="arr" style="left:1359.5px;top:729px;border-width:4px 4px 0 4px;border-color:#505050 transparent transparent transparent"></div>
<div class="gbx" style="left:801px;top:250.5px;width:543px;height:73.5px"></div>
<div class="gl" style="left:809px;top:244px;width:346px"></div>
<span class="tah " style="left:812px;top:243.5px;">Данные между клиентами (трафик клиент-клиент)</span>
<div class="gbx" style="left:801px;top:339.5px;width:543px;height:72.5px"></div>
<div class="gl" style="left:809px;top:333px;width:243px"></div>
<span class="tah " style="left:812px;top:331.1px;">Ограничение количества символов</span>
<div class="gbx" style="left:801px;top:426px;width:543px;height:132.5px"></div>
<div class="gl" style="left:809px;top:419px;width:94px"></div>
<span class="tah " style="left:812px;top:419.1px;">Изображения</span>
<div class="gbx" style="left:801px;top:574px;width:543px;height:186px"></div>
<div class="gl" style="left:809px;top:567px;width:128px"></div>
<span class="tah " style="left:812px;top:566.1px;">Вложенные файлы</span>
<div class="combo" style="left:979px;top:264px;width:356px"></div>
<span class="tah " style="left:984px;top:267.9px;">Через сервер, если нет возможности напрямую</span>
<div class="combo" style="left:979px;top:293.5px;width:356px"></div>
<span class="tah " style="left:984px;top:296.9px;">Через сервер, если нет возможности напрямую</span>
<span class="tah r" style="right:431.5px;top:266.7px;transform:scaleX(1.086)">Передача файлов</span>
<span class="tah r" style="right:431.5px;top:296.2px;transform:scaleX(1.092)">Аудио- и видеосвязь</span>
<div class="combo" style="left:1067px;top:352px;width:268px"></div>
<span class="tah " style="left:1072px;top:355.4px;">20000</span>
<div class="combo" style="left:1067px;top:381.2px;width:268px"></div>
<span class="tah " style="left:1072px;top:384.6px;">40000</span>
<span class="tah r" style="right:341.5px;top:353.9px;">В общих каналах</span>
<span class="tah r" style="right:341.5px;top:383.1px;">В приватных каналах</span>
<div class="combo" style="left:1067px;top:439.8px;width:268px"></div>
<span class="tah " style="left:1072px;top:443.2px;">По умолчанию отключены</span>
<div class="combo" style="left:1067px;top:469px;width:268px"></div>
<span class="tah " style="left:1072px;top:472.4px;">Очень большие</span>
<div class="combo" style="left:1067px;top:498.8px;width:268px"></div>
<span class="tah " style="left:1072px;top:502.1px;">Оригинальный размер, 10 МВ</span>
<div class="combo" style="left:1067px;top:528.2px;width:268px"></div>
<span class="tah " style="left:1072px;top:531.6px;">1000 МБ, ~100 изображений</span>
<span class="tah r" style="right:341.5px;top:441.7px;">В общих каналах</span>
<span class="tah r" style="right:341.5px;top:470.9px;">В приватных каналах</span>
<span class="tah r" style="right:341.5px;top:500.7px;">Оригиналы изображений</span>
<span class="tah r" style="right:341.5px;top:530.1px;">Буфер оригиналов изображений</span>
<div class="spin" style="left:1252px;top:587.5px"></div>
<span class="tah " style="left:1256.5px;top:589.6px;transform:scaleX(1.017)">100000</span>
<span class="tah r" style="right:159px;top:589.6px;">Лимит объема файлов в сообщении/приватном канале (КБ)</span>
<div class="abs" style="left:1311.5px;top:590.5px;width:18px;height:9px;border:1px solid #8a8a8a;border-radius:3px 3px 1px 1px;background:linear-gradient(180deg,#f6f6f6,#e4e4e4)"></div><div class="abs" style="left:1311.5px;top:598.5px;width:18px;height:9px;border:1px solid #8a8a8a;border-radius:1px 1px 3px 3px;background:linear-gradient(180deg,#ececec,#dcdcdc)"></div>
<div class="arr" style="left:1315.5px;top:592.5px;border-width:0 5px 4.5px 5px;border-color:transparent transparent #0a0a0a transparent"></div><div class="arr" style="left:1315.5px;top:601.0px;border-width:4.5px 5px 0 5px;border-color:#0a0a0a transparent transparent transparent"></div>
<div class="spin" style="left:1252px;top:618.1px"></div>
<span class="tah " style="left:1256.5px;top:620.2px;transform:scaleX(1.017)">100000</span>
<span class="tah r" style="right:159px;top:620.2px;">Лимит объема файла в общем канале (КБ)</span>
<div class="abs" style="left:1311.5px;top:621.1px;width:18px;height:9px;border:1px solid #8a8a8a;border-radius:3px 3px 1px 1px;background:linear-gradient(180deg,#f6f6f6,#e4e4e4)"></div><div class="abs" style="left:1311.5px;top:629.1px;width:18px;height:9px;border:1px solid #8a8a8a;border-radius:1px 1px 3px 3px;background:linear-gradient(180deg,#ececec,#dcdcdc)"></div>
<div class="arr" style="left:1315.5px;top:623.1px;border-width:0 5px 4.5px 5px;border-color:transparent transparent #0a0a0a transparent"></div><div class="arr" style="left:1315.5px;top:631.6px;border-width:4.5px 5px 0 5px;border-color:#0a0a0a transparent transparent transparent"></div>
<div class="spin" style="left:1252px;top:648.7px"></div>
<span class="tah " style="left:1256.5px;top:650.8px;transform:scaleX(1.017)">100000</span>
<span class="tah r" style="right:159px;top:650.8px;">Лимит объема файлов в объявлении (КБ)</span>
<div class="abs" style="left:1311.5px;top:651.7px;width:18px;height:9px;border:1px solid #8a8a8a;border-radius:3px 3px 1px 1px;background:linear-gradient(180deg,#f6f6f6,#e4e4e4)"></div><div class="abs" style="left:1311.5px;top:659.7px;width:18px;height:9px;border:1px solid #8a8a8a;border-radius:1px 1px 3px 3px;background:linear-gradient(180deg,#ececec,#dcdcdc)"></div>
<div class="arr" style="left:1315.5px;top:653.7px;border-width:0 5px 4.5px 5px;border-color:transparent transparent #0a0a0a transparent"></div><div class="arr" style="left:1315.5px;top:662.2px;border-width:4.5px 5px 0 5px;border-color:#0a0a0a transparent transparent transparent"></div>
<div class="spin" style="left:1252px;top:679.4px"></div>
<span class="tah " style="left:1256.5px;top:681.5px;transform:scaleX(1.017)">1000</span>
<span class="tah r" style="right:159px;top:681.5px;">Максимальный объем всех хранимых на сервере файлов (МБ)</span>
<div class="abs" style="left:1311.5px;top:682.4px;width:18px;height:9px;border:1px solid #8a8a8a;border-radius:3px 3px 1px 1px;background:linear-gradient(180deg,#f6f6f6,#e4e4e4)"></div><div class="abs" style="left:1311.5px;top:690.4px;width:18px;height:9px;border:1px solid #8a8a8a;border-radius:1px 1px 3px 3px;background:linear-gradient(180deg,#ececec,#dcdcdc)"></div>
<div class="arr" style="left:1315.5px;top:684.4px;border-width:0 5px 4.5px 5px;border-color:transparent transparent #0a0a0a transparent"></div><div class="arr" style="left:1315.5px;top:692.9px;border-width:4.5px 5px 0 5px;border-color:#0a0a0a transparent transparent transparent"></div>
<div class="spin" style="left:1252px;top:710px"></div>
<span class="tah " style="left:1256.5px;top:712.1px;transform:scaleX(1.017)">1000</span>
<span class="tah r" style="right:159px;top:712.1px;">Максимум получателей файлов в многоадресном сообщении</span>
<div class="abs" style="left:1311.5px;top:713px;width:18px;height:9px;border:1px solid #8a8a8a;border-radius:3px 3px 1px 1px;background:linear-gradient(180deg,#f6f6f6,#e4e4e4)"></div><div class="abs" style="left:1311.5px;top:721px;width:18px;height:9px;border:1px solid #8a8a8a;border-radius:1px 1px 3px 3px;background:linear-gradient(180deg,#ececec,#dcdcdc)"></div>
<div class="arr" style="left:1315.5px;top:715px;border-width:0 5px 4.5px 5px;border-color:transparent transparent #0a0a0a transparent"></div><div class="arr" style="left:1315.5px;top:723.5px;border-width:4.5px 5px 0 5px;border-color:#0a0a0a transparent transparent transparent"></div>
<div class="abs" style="left:783px;top:744px;width:606px;height:42px;background:#f0f0f0"></div>
<div class="abs" style="left:790px;top:743px;width:587px;height:1px;background:#898c95"></div>
<div class="btn" style="left:1065px;top:753px;width:97px;border-color:#4d5965"></div>
<div class="btn" style="left:1173px;top:753px;width:97px"></div>
<div class="btn" style="left:1281px;top:753px;width:97px;border-color:#adb2b5;background:#f4f4f4"></div>
<span class="tah c" style="left:1063.5px;width:100px;top:757.8px">OK</span>
<span class="tah c" style="left:1171.5px;width:100px;top:757.8px">Отмена</span>
<span class="tah c" style="left:1279.5px;width:100px;top:757.8px;color:#838383">Применить</span>
</div>

</body>
</html>
